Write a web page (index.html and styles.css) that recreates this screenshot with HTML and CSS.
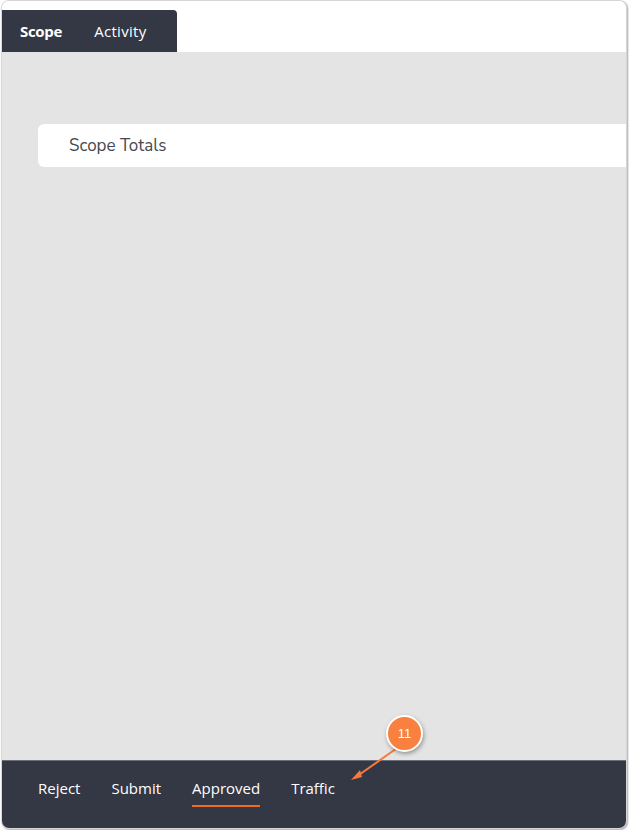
FILE: index.html
```html
<!DOCTYPE html>
<html lang="en">
<head>
    <title>Scope</title>
    <meta charset="UTF-8" />
    <meta name="viewport" content="width=device-width, initial-scale=1.0" />
    <link rel="stylesheet" href="styles.css">
</head>
<body>
    <div class="frame">
        <header class="topbar">
            <nav class="tabs">
                <a href="#" class="tab active">Scope</a>
                <a href="#" class="tab">Activity</a>
            </nav>
        </header>

        <main class="content">
            <div class="card">Scope Totals</div>
        </main>

        <footer class="actions">
            <a href="#" class="action">Reject</a>
            <a href="#" class="action">Submit</a>
            <a href="#" class="action current">Approved</a>
            <a href="#" class="action">Traffic</a>
        </footer>

        <!-- step callout -->
        <svg class="pointer" width="70" height="50" viewBox="0 0 70 50">
            <line x1="52" y1="6" x2="8" y2="37" stroke="#f47b3e" stroke-width="2" />
            <path d="M3 40 L12 30 L14 37 Z" fill="#f47b3e" />
        </svg>
        <div class="badge">11</div>
    </div>
</body>
</html>
```

FILE: styles.css
```css
* {
    margin: 0;
    padding: 0;
    box-sizing: border-box;
}

body {
    font-family: "Open Sans", Arial, sans-serif;
    background: #ffffff;
    padding: 0 2px 1px 1px;
}

.frame {
    position: relative;
    height: 829px;
    display: flex;
    flex-direction: column;
    background: #ffffff;
    border: 1px solid #d6d6d6;
    border-radius: 8px;
    overflow: hidden;
    box-shadow: 1px 1px 2px rgba(0, 0, 0, 0.35);
}

.topbar {
    height: 51px;
    padding-top: 9px;
    background: #ffffff;
}

.tabs {
    display: flex;
    align-items: center;
    gap: 32px;
    width: 175px;
    height: 42px;
    padding-left: 18px;
    background: #343744;
    border-radius: 0 4px 0 0;
}

.tab {
    color: #ffffff;
    text-decoration: none;
    font-size: 15px;
    letter-spacing: 0.3px;
}

.tab.active {
    font-weight: bold;
    letter-spacing: -0.3px;
}

.content {
    flex: 1;
    background: #e3e4e3;
    padding-top: 72px;
    padding-left: 36px;
}

.card {
    height: 43px;
    margin-right: -10px;
    padding-left: 31px;
    display: flex;
    align-items: center;
    background: #ffffff;
    border-radius: 6px 0 0 6px;
    color: #444850;
    font-family: "Nunito Sans", "Noto Sans", sans-serif;
    font-size: 17px;
    padding-bottom: 1px;
}

.actions {
    height: 68px;
    display: flex;
    align-items: flex-start;
    gap: 31px;
    padding: 17px 0 0 36px;
    background: #343744;
    border-top: 1px solid #6b6e78;
}

.action {
    color: #ffffff;
    text-decoration: none;
    font-size: 15px;
    padding-bottom: 7px;
    border-bottom: 2px solid transparent;
}

.action.current {
    border-bottom-color: #ee6c1c;
}

/* callout over the page */
.pointer {
    position: absolute;
    left: 346px;
    top: 739px;
}

.badge {
    position: absolute;
    left: 384px;
    top: 714px;
    width: 37px;
    height: 37px;
    border-radius: 50%;
    background: #f9803f;
    border: 2px solid #ffffff;
    box-shadow: 1px 2px 4px rgba(0, 0, 0, 0.35);
    color: #ffffff;
    font-family: Arial, sans-serif;
    font-size: 13px;
    display: flex;
    align-items: center;
    justify-content: center;
}
```
